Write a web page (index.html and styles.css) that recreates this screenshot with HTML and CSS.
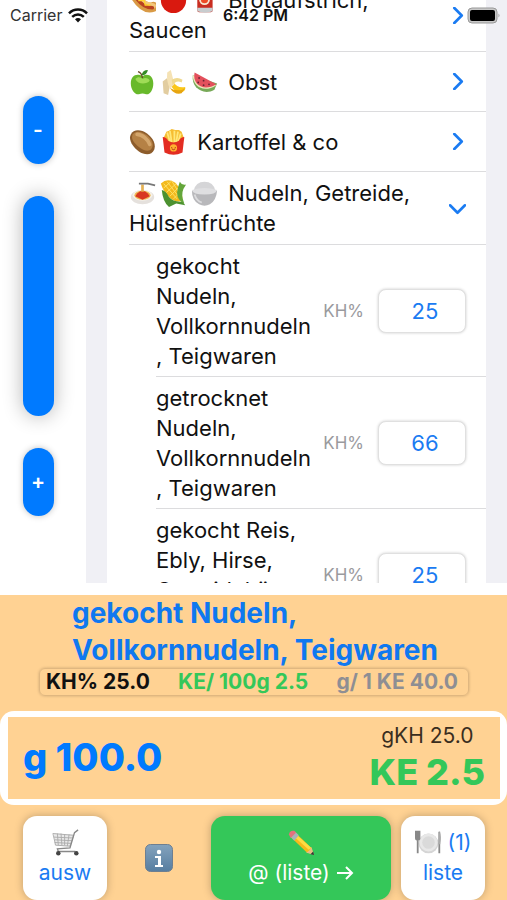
FILE: index.html
```html
<!DOCTYPE html>
<html lang="de">
<head>
  <meta charset="UTF-8">
  <meta name="viewport" content="width=device-width, initial-scale=1">
  <title>KE Rechner</title>
  <link rel="stylesheet" href="styles.css">
</head>
<body>
  <!-- status bar lies over the scrolled list -->
  <div class="status-bar">
    <div class="carrier">
      <span>Carrier</span>
      <svg width="20" height="15" viewBox="0 0 20 15" fill="none" stroke="#111" stroke-width="2.5">
        <path d="M1 5.4C6 .3 14 .3 19 5.4"/>
        <path d="M4.2 8.8c3.4-3.2 8.2-3.2 11.6 0"/>
        <path d="M7 11.2c1.8-1.6 4.2-1.6 6 0L10 14.6z" fill="#111" stroke="none"/>
      </svg>
    </div>
    <span class="time">6:42 PM</span>
    <svg width="34" height="17" viewBox="0 0 34 17">
      <rect x="1" y="1" width="29" height="15" rx="4" fill="#c8c8c8" stroke="#999"/>
      <rect x="3" y="3" width="25" height="11" rx="2" fill="#000"/>
      <path d="M31.500 6.500q2 2 0 4z" fill="#999"/>
    </svg>
  </div>

  <main class="main">
    <aside class="sidebar">
      <button class="pill" type="button">-</button>
      <button class="pill pill-long" type="button" aria-label="Menge"></button>
      <button class="pill" type="button">+</button>
    </aside>

    <div class="list-area">
      <div class="list">
        <button class="row" type="button">
          <span class="row-text">
            <svg class="emoji" viewBox="0 0 30 30"><path d="M6 8q10 18 21 14" stroke="#d99a45" stroke-width="11" stroke-linecap="round" fill="none"/><path d="M5 5q8 15 22 16" stroke="#f3c77b" stroke-width="6" stroke-linecap="round" fill="none"/><path d="M4 5q9 18 22 18" stroke="#b9421f" stroke-width="4" stroke-linecap="round" fill="none"/><path d="M6 9l5 1 0 5 6 0 1 5 6 0" stroke="#ffd331" stroke-width="1.500" fill="none"/></svg><svg class="emoji" viewBox="0 0 30 30"><circle cx="15" cy="15" r="14" fill="#d9190f"/></svg><svg class="emoji" viewBox="0 0 30 30"><rect x="7" y="3" width="17" height="25" rx="2" fill="#c92d20"/><path d="M7 5q8 3 17 0v-3H7z" fill="#b8bdc0"/><path d="M7 23h17v4q-8 3-17 0z" fill="#c8ccce"/><circle cx="15" cy="14" r="6" fill="#f7e6cf"/><circle cx="15" cy="14" r="4" fill="#ed4b25"/></svg>
            Brotaufstrich, Saucen</span>
          <svg class="chevron" viewBox="0 0 16 16"><path d="M5 1l7 7-7 7"/></svg>
        </button>
        <button class="row" type="button">
          <span class="row-text">
            <svg class="emoji" viewBox="0 0 30 30"><path d="M15 8C8 4 2 8 2 16c0 7 5 13 9 12 3-1 5-1 8 0 4 1 8-5 8-12 0-8-6-12-12-8z" fill="#68b92b"/><path d="M7 11c3-3 6-2 8 0 3-2 7-1 8 2-3 4-13 5-16-2z" fill="#9fdc57"/><path d="M10 3q4 1 5 7" stroke="#6b4525" stroke-width="1.500" fill="none"/><path d="M14 7q1-6 7-6-1 6-7 6z" fill="#348b25"/></svg><svg class="emoji" viewBox="0 0 30 30"><path d="M8 10l-5 4 1 13 5 2 2-10z" fill="#e2cda0"/><path d="M10 8q0 16 13 18 6-1 5-6-9 2-14-7z" fill="#fbc719"/><path d="M8 4l4-3 4 16-5 5q-4-8-3-18z" fill="#f5e2b4"/><path d="M13 12q6-4 12 0l-1 3q-6-3-10 3z" fill="#efd98f"/><path d="M11 21q5 8 13 6l4-6-3 2q-8 2-14-2z" fill="#e7a511"/></svg><svg class="emoji" viewBox="0 0 30 30"><path d="M2 7C0 21 14 30 26 23l3-7z" fill="#78a958"/><path d="M2 7C2 20 15 27 28 18z" fill="#eee8bd"/><path d="M4 4C1 17 14 26 28 17z" fill="#e3505c"/><g fill="#682433"><circle cx="9" cy="10" r="1"/><circle cx="8" cy="15" r="1"/><circle cx="14" cy="13" r="1"/><circle cx="14" cy="18" r="1"/><circle cx="20" cy="17" r="1"/></g></svg>
            Obst</span>
          <svg class="chevron" viewBox="0 0 16 16"><path d="M5 1l7 7-7 7"/></svg>
        </button>
        <button class="row" type="button">
          <span class="row-text">
            <svg class="emoji" viewBox="0 0 30 30"><path d="M2 6C5 0 13 0 20 5c7 5 10 12 8 18-3 7-11 6-17 2C4 20-1 12 2 6z" fill="#8d5c2b"/><path d="M4 6C8 1 14 3 20 7c6 5 8 11 5 15-3 4-9 2-14-2C5 15 2 11 4 6z" fill="#b58145"/><path d="M9 6c6 0 12 6 14 11" stroke="#d4a66c" stroke-width="4" stroke-linecap="round" fill="none"/></svg><svg class="emoji" viewBox="0 0 30 30"><path d="M4 10L7 3l3-1 3-2 4 1 4 0 3 2 3 8-4 7H7z" fill="#f6bd32"/><path d="M8 4l3 10m0-12l2 13M16 2v13m4-12l-2 12m5-10l-3 10" stroke="#ffe77b" stroke-width="2"/><path d="M3 9q4 0 6 4 6 4 12 0 2-4 6-4l-2 17q-10 5-20 0z" fill="#e32d22"/><circle cx="15" cy="21" r="4" fill="#ffb02e"/><path d="M13 20v1m4-1v1m-4 1q2 2 4 0" stroke="#a72417" fill="none"/></svg>
            Kartoffel &amp; co</span>
          <svg class="chevron" viewBox="0 0 16 16"><path d="M5 1l7 7-7 7"/></svg>
        </button>
        <button class="row" type="button" aria-expanded="true">
          <span class="row-text">
            <svg class="emoji" viewBox="0 0 30 30"><ellipse cx="15" cy="19" rx="13" ry="8" fill="#e5e1dd"/><ellipse cx="15" cy="17" rx="11" ry="6" fill="#f7f2e9"/><ellipse cx="15" cy="17" rx="9" ry="5" fill="#efb956"/><path d="M9 15q6-6 12 0l2 3-8 4-8-4z" fill="#d83821"/><path d="M15 13V5" stroke="#e5b253" stroke-width="3"/><path d="M11 4h10l8 2" stroke="#777" stroke-width="2" fill="none"/></svg><svg class="emoji" viewBox="0 0 30 30"><path d="M1 4Q8-3 17 3q8 8 8 20-8 3-15-4Q3 12 1 4z" fill="#f3b91c"/><path d="M4 4l15 17M8 2l14 18M13 1l10 16M4 9L12 2M7 14L18 4M11 18L21 8m-6 13l9-9" stroke="#ffe36b"/><path d="M2 11q5 1 8 8 5 6 15 5l3 4-10-2-8 4Q3 24 2 11z" fill="#4c9130"/><path d="M22 2q2 4 7 3l-3 5q-3 7 1 16-8-3-8-12 1-7 3-12z" fill="#64a63b"/></svg><svg class="emoji" viewBox="0 0 30 30"><path d="M3 12Q5 2 15 2t12 10z" fill="#d5d5d7"/><path d="M1 12q14 4 28 0-1 11-8 15-6 3-12 0-8-4-8-15z" fill="#b8b8bb"/><path d="M1 11q14-4 28 0-1 5-14 5T1 11z" fill="#dfdfe1"/><path d="M4 16q2 7 8 9" stroke="#dcdcde" stroke-width="2" fill="none"/></svg>
            Nudeln, Getreide, Hülsenfrüchte</span>
          <svg class="chevron" viewBox="0 0 16 16"><path d="M1 5l7 7 7-7"/></svg>
        </button>

        <div class="sub-row">
          <span class="food-name">gekocht Nudeln, Vollkornnudeln, Teigwaren</span>
          <label for="kh1">KH%</label>
          <input id="kh1" type="text" value="25">
        </div>
        <div class="sub-row">
          <span class="food-name">getrocknet Nudeln, Vollkornnudeln, Teigwaren</span>
          <label for="kh2">KH%</label>
          <input id="kh2" type="text" value="66">
        </div>
        <div class="sub-row">
          <span class="food-name">gekocht Reis, Ebly, Hirse, Getreidekörner, Quinoa</span>
          <label for="kh3">KH%</label>
          <input id="kh3" type="text" value="25">
        </div>
      </div>
    </div>
  </main>

  <footer class="panel">
    <h1>gekocht Nudeln, Vollkornnudeln, Teigwaren</h1>
    <div class="facts">
      <span>KH% 25.0</span>
      <span class="green">KE/ 100g 2.5</span>
      <span class="gray">g/ 1 KE 40.0</span>
    </div>
    <div class="result-frame">
      <div class="result">
        <strong class="grams">g 100.0</strong>
        <div class="totals">
          <span class="gkh">gKH 25.0</span>
          <strong class="ke">KE 2.5</strong>
        </div>
      </div>
    </div>
    <div class="actions">
      <button class="action" type="button">
        <span><svg class="emoji" viewBox="0 0 30 30"><path d="M2 5l22 1-4 14-17-2z" fill="#e9e9e9"/><path d="M1 5l23 2-4 12-16-1zM2 9l21 1M3 12l19 1M3 15l18 1M6 5l1 13M10 5l1 13M14 6l0 12M19 6l-2 13" stroke="#aaa" fill="none"/><path d="M29 1l-4 3-5 17-14 1 1 3h19" stroke="#888" stroke-width="1.500" fill="none"/><circle cx="7" cy="27" r="2.500" fill="#444"/><circle cx="27" cy="27" r="2.500" fill="#444"/></svg></span>
        <span>ausw</span>
      </button>
      <button class="info" type="button" aria-label="Info">
        <svg width="28" height="28" viewBox="0 0 28 28"><defs><linearGradient id="blue" x2="0" y2="1"><stop stop-color="#84a3bd"/><stop offset="1" stop-color="#567da0"/></linearGradient></defs><rect x=".5" y=".5" width="27" height="27" rx="5" fill="url(#blue)" stroke="#6d7f91"/><circle cx="14" cy="8" r="2.200" fill="#fff"/><path d="M10 12h6v9h2v2h-8v-2h3v-7h-3z" fill="#fff"/></svg>
      </button>
      <button class="action action-main" type="button">
        <span><svg class="emoji" viewBox="0 0 30 30"><path d="M8 4l18 17 2 7-7-2L3 9z" fill="#f8b91b"/><path d="M8 5l18 16-3 2L5 7z" fill="#ffdc43"/><path d="M3 9l5-6 4 4-5 6z" fill="#aab3b8"/><path d="M1 6q1-5 6-4l2 2-6 6z" fill="#e4727c"/><path d="M26 20l3 9-9-3q4-1 6-6z" fill="#e6bd87"/><path d="M29 29l-4-1 3-3z" fill="#333"/></svg></span>
        <span>@ (liste) <svg class="arrow" viewBox="0 0 18 16"><path d="M1 8h15M10 2l6 6-6 6"/></svg></span>
      </button>
      <button class="action" type="button">
        <span><svg class="emoji" viewBox="0 0 30 30"><circle cx="15" cy="16" r="11" fill="#d5d5d5"/><circle cx="15" cy="15" r="10" fill="#e8e8e8"/><circle cx="15" cy="15" r="7" fill="#dadada"/><path d="M1 2v8q0 2 2 2t2-2V2M3 2v25M27 3v24" stroke="#888" stroke-width="2" fill="none"/><path d="M27 2q3 6 1 15h-2z" fill="#aaa"/></svg> (1)</span>
        <span>liste</span>
      </button>
    </div>
  </footer>
</body>
</html>
```
FILE: styles.css
```css
* {
  box-sizing: border-box;
}

body {
  margin: 0;
  height: 100vh;
  display: flex;
  flex-direction: column;
  overflow: hidden;
  background: #fff;
  color: #111;
  font-family: Inter, "Liberation Sans", sans-serif;
  font-size: 22px;
  line-height: 30px;
}

button,
input {
  font: inherit;
  border: 0;
}

button {
  padding: 0;
  cursor: pointer;
}

.status-bar {
  position: absolute;
  top: 0;
  left: 0;
  right: 0;
  z-index: 1;
  display: grid;
  grid-template-columns: 1fr auto 1fr;
  align-items: center;
  padding: 0 6px 0 10px;
  font-size: 16px;
  pointer-events: none;
}

.status-bar > svg {
  justify-self: end;
}

.carrier {
  display: flex;
  align-items: center;
  gap: 6px;
  color: #333;
}

.time {
  font-weight: 600;
}

.main {
  flex: 1;
  min-height: 0;
  display: flex;
  overflow: hidden;
}

.sidebar {
  flex: 0 0 86px;
  display: flex;
  flex-direction: column;
  align-items: center;
  gap: 32px;
  padding: 96px 10px 0 0;
}

.pill {
  width: 31px;
  height: 68px;
  flex: none;
  border-radius: 16px;
  background: #007aff;
  color: #fff;
  font-size: 21px;
  font-weight: 600;
  box-shadow: 0 0 6px rgba(0, 0, 0, 0.25);
}

.pill-long {
  height: 220px;
  box-shadow: 0 0 20px rgba(0, 0, 0, 0.3);
}

.list-area {
  flex: 1;
  padding: 0 21px;
  background: #f0f0f5;
}

.list {
  margin-top: -21px;
  padding-left: 22px;
  background: #fff;
}

.row,
.sub-row {
  display: flex;
  align-items: center;
  border-bottom: 1px solid #dcdcde;
}

.row {
  width: 100%;
  min-height: 60px;
  padding: 6px 20px 6px 0;
  background: none;
  color: inherit;
  text-align: left;
}

.row-text {
  flex: 1;
  padding-right: 26px;
}

.emoji {
  width: 27px;
  height: 27px;
  margin-right: 4px;
  vertical-align: -6px;
}

.chevron {
  width: 17px;
  height: 17px;
  fill: none;
  stroke: #1a7bf2;
  stroke-width: 2.5;
  stroke-linecap: round;
  stroke-linejoin: round;
}

.sub-row {
  margin-left: 27px;
  padding: 6px 20px 5px 0;
}

.food-name {
  width: 157px;
  overflow-wrap: break-word;
}

.sub-row label {
  flex: 1;
  padding-right: 14px;
  text-align: right;
  font-size: 17px;
  color: #9a9a9e;
}

.sub-row input {
  width: 88px;
  height: 44px;
  padding: 0 0 0 6px;
  border: 1px solid #e0e0e0;
  border-radius: 8px;
  background: #fff;
  box-shadow: 0 0 3px rgba(0, 0, 0, 0.2);
  color: #1a7bf2;
  text-align: center;
}

.panel {
  margin-top: 12px;
  background: #ffd293;
}

h1 {
  margin: 0 64px 0 72px;
  color: #0f78f0;
  font-size: 28px;
  font-weight: 700;
  line-height: 37px;
}

.facts {
  display: flex;
  justify-content: space-between;
  margin: -1px 38px 15px 39px;
  padding: 0 10px 0 6px;
  border: 1px solid #e0b780;
  border-radius: 6px;
  box-shadow: 0 0 3px rgba(0, 0, 0, 0.2);
  color: #111;
  font-size: 21px;
  font-weight: 700;
  line-height: 26px;
}

.green,
.ke {
  color: #34c759;
}

.gray {
  color: #8e8e93;
}

.result-frame {
  padding: 6px 7px 6px 8px;
  border-radius: 14px;
  background: #fff;
}

.result {
  display: flex;
  align-items: center;
  justify-content: space-between;
  padding: 4px 15px 6px;
  background: #ffd293;
}

.grams,
.ke {
  font-size: 36px;
  font-weight: 800;
  line-height: 42px;
}

.grams {
  color: #007aff;
  font-size: 38px;
}

.totals {
  display: flex;
  flex-direction: column;
  align-items: center;
}

.gkh {
  color: #3a2e1f;
  font-size: 21px;
}

.actions {
  display: flex;
  align-items: center;
  padding: 11px 22px 0 23px;
}

.action {
  width: 84px;
  height: 84px;
  display: flex;
  flex-direction: column;
  align-items: center;
  justify-content: center;
  border-radius: 14px;
  background: #fff;
  box-shadow: 0 0 8px rgba(0, 0, 0, 0.25);
  color: #1a7bf2;
  font-size: 21px;
  white-space: nowrap;
}

.action .emoji {
  margin: 0;
}

.action-main {
  flex: 1;
  margin-right: 10px;
  background: #34c759;
  color: #fff;
}

.info {
  display: flex;
  margin: 0 38px;
  background: none;
}

.arrow {
  width: 18px;
  height: 16px;
  vertical-align: -1px;
  fill: none;
  stroke: currentColor;
  stroke-width: 2;
}
```
